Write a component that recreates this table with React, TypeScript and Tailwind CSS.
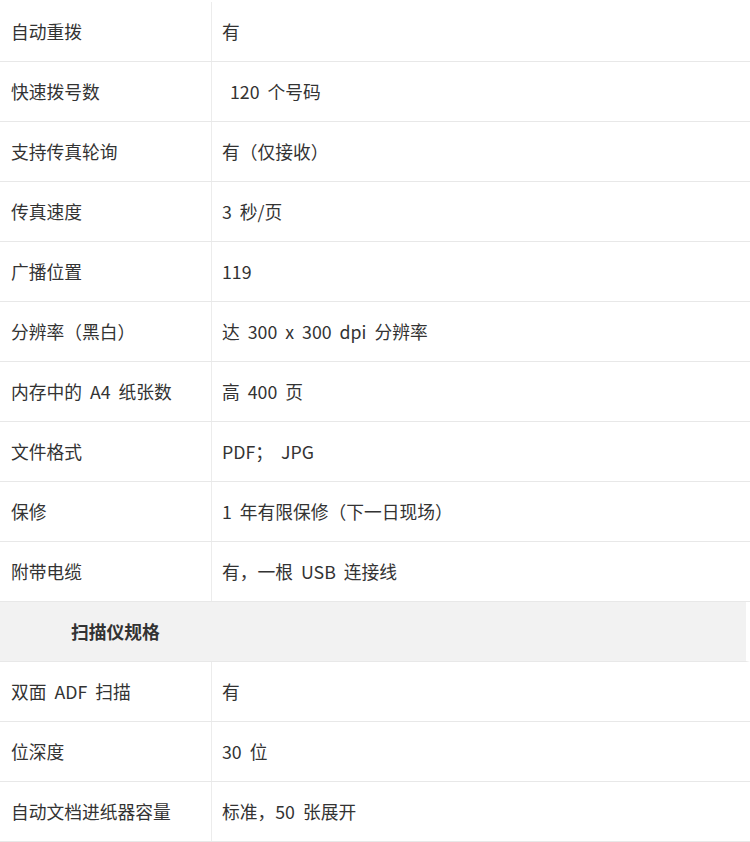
import React from "react";

const rowsA: [string, string][] = [
  ["自动重拨", "有"],
  ["快速拨号数", " 120 个号码"],
  ["支持传真轮询", "有（仅接收）"],
  ["传真速度", "3 秒/页"],
  ["广播位置", "119"],
  ["分辨率（黑白）", "达 300 x 300 dpi 分辨率"],
  ["内存中的 A4 纸张数", "高 400 页"],
  ["文件格式", "PDF； JPG"],
  ["保修", "1 年有限保修（下一日现场）"],
  ["附带电缆", "有，一根 USB 连接线"],
];

const rowsB: [string, string][] = [
  ["双面 ADF 扫描", "有"],
  ["位深度", "30 位"],
  ["自动文档进纸器容量", "标准，50 张展开"],
];

function Row({ k, v }: { k: string; v: string }) {
  return (
    <div className="grid grid-cols-[212px_1fr] h-[60px] border-b border-[#e8e8e8]">
      <div className="flex items-center pl-[11px] border-r border-[#ececec] whitespace-pre">{k}</div>
      <div className="flex items-center pl-[10px] whitespace-pre">{v}</div>
    </div>
  );
}

export default function App() {
  return (
    <div
      className="w-[750px] h-[842px] overflow-hidden bg-white text-[#333] text-[17.75px] [word-spacing:4px] pt-[2px]"
      style={{ fontFamily: '"Noto Sans CJK SC", "Noto Sans", sans-serif' }}
    >
      {rowsA.map(([k, v]) => (
        <Row key={k} k={k} v={v} />
      ))}
      <div className="h-[60px] bg-[#f2f2f2] border-b border-r-[4px] border-[#e8e8e8] border-r-white flex items-center pl-[71px] font-bold">
        扫描仪规格
      </div>
      {rowsB.map(([k, v]) => (
        <Row key={k} k={k} v={v} />
      ))}
    </div>
  );
}
